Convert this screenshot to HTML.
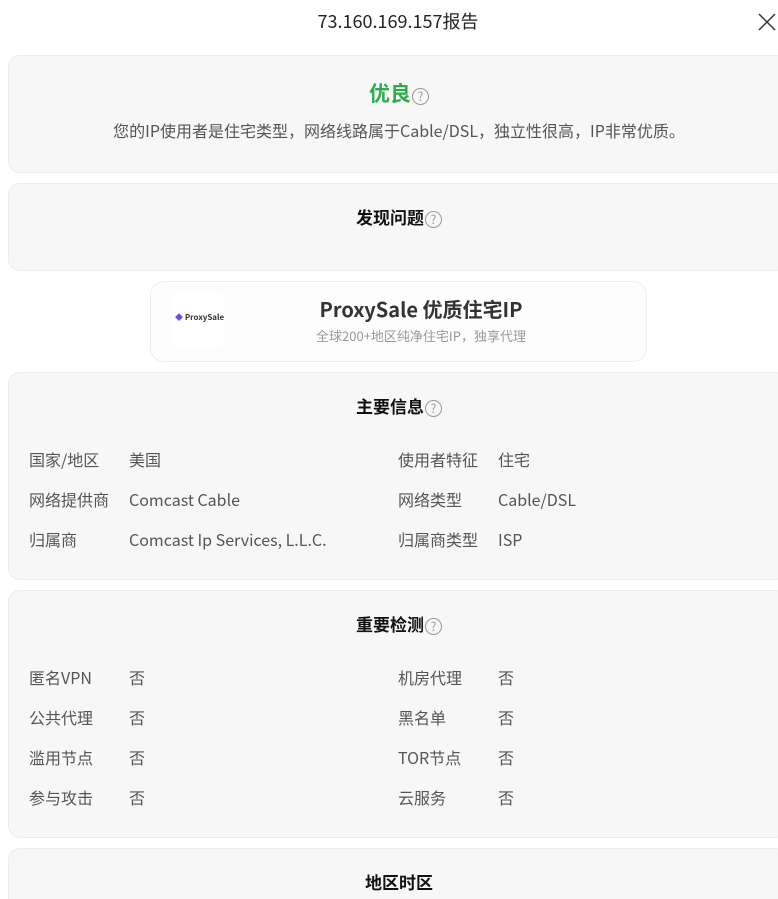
<!DOCTYPE html>
<html><head><meta charset="utf-8"><style>
*{box-sizing:border-box;margin:0;padding:0}
html,body{width:778px;height:899px;overflow:hidden}
body{background:#fff;font-family:"Noto Sans CJK SC","Liberation Sans",sans-serif;position:relative;color:#333}
.abs{position:absolute}
.title{top:8px;left:0;width:796px;text-align:center;font-size:18px;color:#222;line-height:26px}
.close{top:12px;left:757px;width:20px;height:20px}
.card{position:absolute;left:8px;width:780px;background:#f7f7f7;border:1px solid #ececec;border-radius:12px}
.h{position:absolute;left:0;width:780px;text-align:center;font-size:17px;font-weight:bold;color:#111;line-height:24px}
.q{display:inline-block;width:17px;height:17px;border:1px solid #999;border-radius:50%;font-size:12px;line-height:15px;color:#999;font-weight:normal;text-align:center;vertical-align:0px;margin-left:1px}
.row{position:absolute;font-size:16px;color:#555;line-height:22px}
</style></head><body>
<div class="abs title">73.160.169.157报告</div>
<svg class="abs close" viewBox="0 0 20 20"><path d="M2 2L18 18M18 2L2 18" stroke="#333" stroke-width="1.5"/></svg>

<div class="card" style="top:55px;height:118px">
<div class="h" style="top:23px;color:#2fad4e;font-size:21px;line-height:28px">优良<span class="q">?</span></div>
<div class="abs" style="top:62px;left:0;width:780px;text-align:center;font-size:16px;color:#555;line-height:24px">您的IP使用者是住宅类型，网络线路属于Cable/DSL，独立性很高，IP非常优质。</div>
</div>

<div class="card" style="top:183px;height:88px">
<div class="h" style="top:21px">发现问题<span class="q">?</span></div>
</div>

<div class="abs" style="top:281px;left:150px;width:497px;height:81px;border:1px solid #eee;border-radius:14px;background:#fdfdfd">
<div class="abs" style="top:10px;left:20px;width:52px;height:56px;background:#fff"></div>
<div class="abs" style="top:30px;left:24px;font-size:8px;font-weight:bold;color:#333"><span style="color:#6c4cf0">◆</span> ProxySale</div>
<div class="abs" style="top:13px;left:0;width:540px;text-align:center;font-size:20px;font-weight:bold;color:#333;line-height:28px">ProxySale 优质住宅IP</div>
<div class="abs" style="top:44px;left:0;width:540px;text-align:center;font-size:13px;color:#999;line-height:20px">全球200+地区纯净住宅IP，独享代理</div>
</div>

<div class="card" style="top:372px;height:208px">
<div class="h" style="top:21px">主要信息<span class="q">?</span></div>
<div class="row" style="top:75px;left:20px">国家/地区</div><div class="row" style="top:75px;left:120px">美国</div>
<div class="row" style="top:75px;left:389px">使用者特征</div><div class="row" style="top:75px;left:489px">住宅</div>
<div class="row" style="top:115px;left:20px">网络提供商</div><div class="row" style="top:115px;left:120px">Comcast Cable</div>
<div class="row" style="top:115px;left:389px">网络类型</div><div class="row" style="top:115px;left:489px">Cable/DSL</div>
<div class="row" style="top:155px;left:20px">归属商</div><div class="row" style="top:155px;left:120px">Comcast Ip Services, L.L.C.</div>
<div class="row" style="top:155px;left:389px">归属商类型</div><div class="row" style="top:155px;left:489px">ISP</div>
</div>

<div class="card" style="top:590px;height:248px">
<div class="h" style="top:21px">重要检测<span class="q">?</span></div>
<div class="row" style="top:75px;left:20px">匿名VPN</div><div class="row" style="top:75px;left:120px">否</div>
<div class="row" style="top:75px;left:389px">机房代理</div><div class="row" style="top:75px;left:489px">否</div>
<div class="row" style="top:115px;left:20px">公共代理</div><div class="row" style="top:115px;left:120px">否</div>
<div class="row" style="top:115px;left:389px">黑名单</div><div class="row" style="top:115px;left:489px">否</div>
<div class="row" style="top:155px;left:20px">滥用节点</div><div class="row" style="top:155px;left:120px">否</div>
<div class="row" style="top:155px;left:389px">TOR节点</div><div class="row" style="top:155px;left:489px">否</div>
<div class="row" style="top:195px;left:20px">参与攻击</div><div class="row" style="top:195px;left:120px">否</div>
<div class="row" style="top:195px;left:389px">云服务</div><div class="row" style="top:195px;left:489px">否</div>
</div>

<div class="card" style="top:848px;height:51px;border-bottom:none;border-radius:12px 12px 0 0">
<div class="h" style="top:21px">地区时区</div>
</div>
</body></html>
